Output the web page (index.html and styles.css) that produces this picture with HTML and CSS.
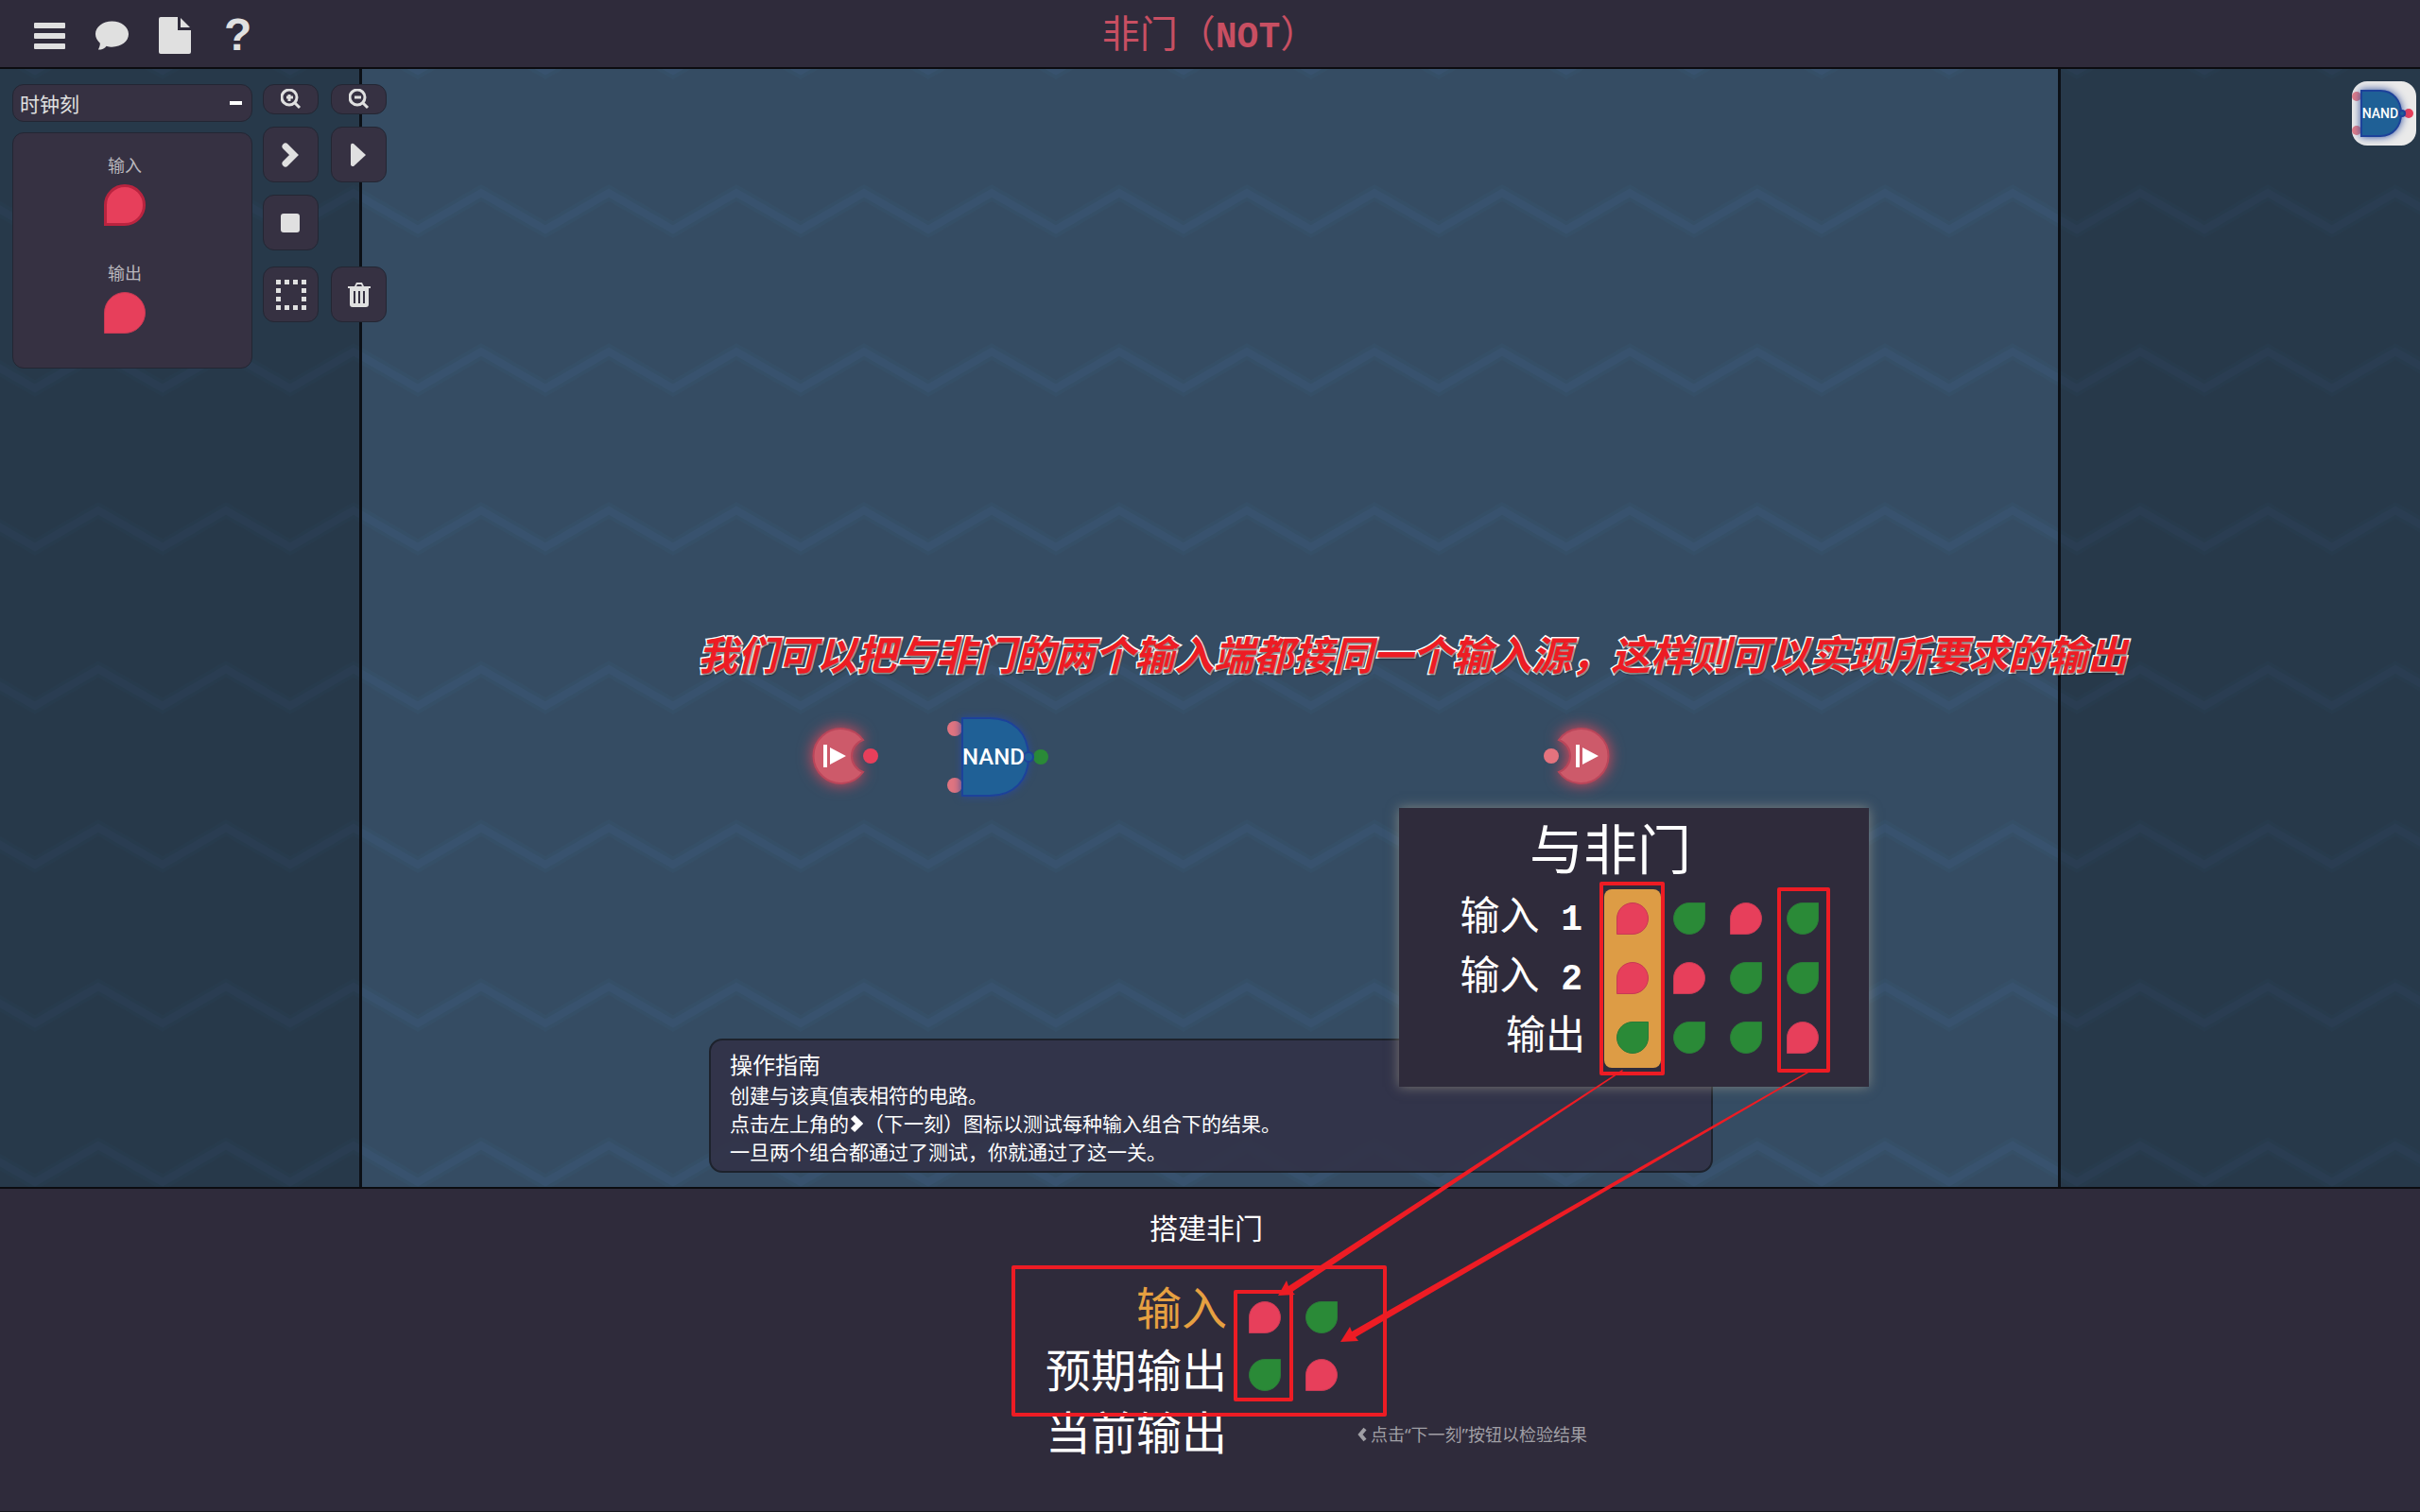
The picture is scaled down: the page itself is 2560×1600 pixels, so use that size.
FILE: index.html
```html
<!DOCTYPE html>
<html lang="zh-CN">

<head>
    <meta charset="UTF-8">
    <meta name="viewport" content="width=device-width, initial-scale=1.0">
    <title>非门（NOT）</title>
    <link rel="stylesheet" href="styles.css">
</head>

<body>
    <header class="header">
        <nav class="menu">
            <button type="button" aria-label="菜单">
                <svg width="33" height="30" viewBox="0 0 33 30"><rect y="2" width="33" height="6" rx="1"/><rect y="13" width="33" height="6" rx="1"/><rect y="24" width="33" height="6" rx="1"/></svg>
            </button>
            <button type="button" aria-label="对话">
                <svg width="37" height="34" viewBox="0 0 38 34"><path d="M19 2C9 2 1 8 1 16c0 4 2 7 5 10 0 3-1 5-2 7 4 0 7-1 9-4 2 1 4 1 6 1 10 0 18-6 18-14S29 2 19 2z"/></svg>
            </button>
            <button type="button" aria-label="文档">
                <svg width="34" height="40" viewBox="0 0 34 40"><path d="M2 1h18v14h14v23a2 2 0 0 1-2 2H2a2 2 0 0 1-2-2V3a2 2 0 0 1 2-2z"/><path d="M23 2l10 10H23z"/></svg>
            </button>
            <button type="button" class="help" aria-label="帮助">?</button>
        </nav>
        <h1>非门（<span>NOT</span>）</h1>
    </header>

    <main class="workspace">
        <svg class="waves" aria-hidden="true">
            <defs>
                <pattern id="zigzag" x="37" y="100" width="135" height="168" patternUnits="userSpaceOnUse">
                    <path d="M-68 31L0 70L67 31L135 70L203 31" fill="none" stroke="#354f67" stroke-width="15"/>
                    <path d="M-68 31L0 70L67 31L135 70L203 31" fill="none" stroke="#38526e" stroke-width="8"/>
                </pattern>
            </defs>
            <rect width="100%" height="100%" fill="url(#zigzag)"/>
        </svg>

        <aside class="side side-left">
            <div class="toolbox">
                <button type="button" class="fold">时钟刻<i></i></button>
                <div class="ports">
                    <span>输入</span>
                    <i class="drop big edge"></i>
                    <span>输出</span>
                    <i class="drop big"></i>
                </div>
            </div>
            <div class="tools">
                <button type="button" class="flat" aria-label="放大">
                    <svg width="22" height="22" viewBox="0 0 22 22"><path class="line" d="M15 15l5 5M9 6v7M6 9h7"/><circle class="line" cx="9" cy="9" r="8"/></svg>
                </button>
                <button type="button" class="flat" aria-label="缩小">
                    <svg width="22" height="22" viewBox="0 0 22 22"><path class="line" d="M15 15l5 5M6 9h7"/><circle class="line" cx="9" cy="9" r="8"/></svg>
                </button>
                <button type="button" aria-label="下一刻">
                    <svg width="20" height="26" viewBox="0 0 20 26"><path class="thick" d="M4 4l9 9l-9 9"/></svg>
                </button>
                <button type="button" aria-label="运行">
                    <svg width="20" height="26" viewBox="0 0 20 26"><path d="M1 3Q1 0 4 1L17 13L4 25Q1 25 1 23z"/></svg>
                </button>
                <button type="button" aria-label="停止">
                    <svg width="22" height="20" viewBox="0 0 22 20"><rect width="20" height="20" rx="3"/></svg>
                </button>
                <button type="button" class="row-start" aria-label="框选">
                    <svg width="32" height="32" viewBox="0 0 32 32"><path d="M0 0h5v5H0zM9 0h5v5H9zM18 0h5v5h-5zM27 0h5v5h-5zM0 9h5v5H0zM27 9h5v5h-5zM0 18h5v5H0zM27 18h5v5h-5zM0 27h5v5H0zM9 27h5v5H9zM18 27h5v5h-5zM27 27h5v5h-5z"/></svg>
                </button>
                <button type="button" class="row-end" aria-label="删除">
                    <svg width="24" height="26" viewBox="0 0 24 26"><path fill-rule="evenodd" d="M0 4h7l2-4h6l2 4h7v2h-2v17a3 3 0 0 1-3 3H5a3 3 0 0 1-3-3V6H0zM9 4h6l-1-2h-4zM6 9v13h2V9zM11 9v13h2V9zM16 9v13h2V9z"/></svg>
                </button>
            </div>
        </aside>

        <section class="board">
            <div class="guide">
                <h2>操作指南</h2>
                <p>创建与该真值表相符的电路。</p>
                <p>点击左上角的<svg width="14" height="20" viewBox="0 0 14 20"><path d="M3 3l7 7l-7 7" fill="none" stroke="#fff" stroke-width="6"/></svg>（下一刻）图标以测试每种输入组合下的结果。</p>
                <p>一旦两个组合都通过了测试，你就通过了这一关。</p>
            </div>
        </section>

        <aside class="side side-right">
            <button type="button" class="gate" aria-label="与非门">
                <svg width="68" height="68" viewBox="0 0 68 68">
                    <circle cx="5" cy="16" r="5" fill="#df7c88"/>
                    <circle cx="5" cy="52" r="5" fill="#df7c88"/>
                    <circle cx="60" cy="34" r="5" fill="#e73f5b"/>
                    <path class="nand glow" d="M10 10h20c14 0 22 11 22 24s-8 24-22 24H10z"/>
                    <circle class="nand" cx="53" cy="34" r="3"/>
                    <text x="30" y="39" font-size="14">NAND</text>
                </svg>
            </button>
        </aside>

        <!-- 画布上的元件 -->
        <svg class="node node-in" width="90" height="90" viewBox="0 0 90 90">
            <path class="pin" d="M65 28a29 29 0 1 0 0 34a18 18 0 0 1 0-34z"/>
            <path d="M23 33h4v24h-4zM30 36l17 9l-17 9z" fill="#fff"/>
            <circle cx="73" cy="45" r="8" fill="#e73f5b"/>
        </svg>
        <svg class="node node-nand" width="120" height="110" viewBox="0 0 120 110">
            <circle cx="20" cy="25" r="8" fill="#df7480"/>
            <circle cx="20" cy="85" r="8" fill="#df7480"/>
            <circle cx="111" cy="55" r="8" fill="#2a8a37"/>
            <path class="nand glow" d="M28 14h29c25 0 41 16 41 41S82 96 57 96H28z"/>
            <circle class="nand" cx="98" cy="55" r="5"/>
            <text x="61" y="63" font-size="24">NAND</text>
        </svg>
        <svg class="node node-out" width="90" height="90" viewBox="0 0 90 90">
            <path class="pin" d="M25 28a29 29 0 1 1 0 34a18 18 0 0 0 0-34z"/>
            <path d="M43 33h4v24h-4zM50 36l17 9l-17 9z" fill="#fff"/>
            <circle cx="17" cy="45" r="8" fill="#e4737e"/>
        </svg>
    </main>

    <section class="verify">
        <h2>搭建非门</h2>
        <table class="truth">
            <tr class="first">
                <th scope="row" class="active">输入</th>
                <td><i class="drop"></i></td>
                <td><i class="drop green"></i></td>
            </tr>
            <tr class="second">
                <th scope="row">预期输出</th>
                <td><i class="drop green"></i></td>
                <td><i class="drop"></i></td>
            </tr>
            <tr>
                <th scope="row">当前输出</th>
                <td></td>
                <td></td>
                <td class="hint"><svg width="10" height="16" viewBox="0 0 10 16"><path d="M8 2L3 8l5 6" fill="none" stroke="#a09fa5" stroke-width="4"/></svg>点击“下一刻”按钮以检验结果</td>
            </tr>
        </table>
    </section>

    <div class="popup">
        <h2>与非门</h2>
        <table>
            <tr>
                <th scope="row">输入<b> 1</b></th>
                <td><i class="drop"></i></td>
                <td><i class="drop green"></i></td>
                <td><i class="drop"></i></td>
                <td><i class="drop green"></i></td>
            </tr>
            <tr>
                <th scope="row">输入<b> 2</b></th>
                <td><i class="drop"></i></td>
                <td><i class="drop"></i></td>
                <td><i class="drop green"></i></td>
                <td><i class="drop green"></i></td>
            </tr>
            <tr>
                <th scope="row">输出</th>
                <td><i class="drop green"></i></td>
                <td><i class="drop green"></i></td>
                <td><i class="drop green"></i></td>
                <td><i class="drop"></i></td>
            </tr>
        </table>
    </div>

    <p class="note">我们可以把与非门的两个输入端都接同一个输入源，这样则可以实现所要求的输出</p>

    <!-- 红框和箭头 -->
    <svg class="marks" width="2560" height="1600" viewBox="0 0 2560 1600" aria-hidden="true">
        <g fill="none" stroke="#ed1c24" stroke-width="4" stroke-linejoin="round">
            <rect x="1694" y="935" width="65" height="201"/>
            <rect x="1882" y="941" width="52" height="192"/>
            <rect x="1072" y="1341" width="393" height="156"/>
            <rect x="1307" y="1367" width="59" height="114"/>
        </g>
        <g fill="#ed1c24">
            <path d="M1717 1133L1367 1367L1370 1370L1352 1371L1361 1355L1363 1361L1716 1132z"/>
            <path d="M1915 1134L1434 1415L1437 1419L1418 1420L1428 1404L1430 1409L1914 1133z"/>
        </g>
    </svg>
</body>

</html>
```
FILE: styles.css
```css
* {
    box-sizing: border-box;
}

body {
    margin: 0;
    min-height: 100vh;
    display: flex;
    flex-direction: column;
    position: relative;
    overflow-x: hidden;
    background-color: #2f2b3b;
    color: #fff;
    font-family: "Noto Sans CJK SC", sans-serif;
}

h1,
h2,
p {
    margin: 0;
    font-weight: 400;
}

button {
    padding: 0;
    border: none;
    background: none;
    color: #e0e0e0;
    font-family: inherit;
    cursor: pointer;
}

svg {
    fill: #e0e0e0;
}

/* 顶栏 */
.header {
    height: 73px;
    display: grid;
    grid-template-columns: 1fr auto 1fr;
    align-items: center;
    border-bottom: 2px solid #0c0c10;
}

.menu {
    display: flex;
    align-items: center;
    gap: 31px;
    padding: 2px 0 0 36px;
}

.menu svg {
    display: block;
}

.help {
    margin-left: 4px;
    font: 700 48px/48px "Liberation Sans", sans-serif;
}

.header h1 {
    padding-bottom: 6px;
    color: #c84f62;
    font-size: 40px;
    line-height: 60px;
}

.header h1 span {
    font: 700 38px/40px "Liberation Mono", monospace;
}

/* 工作区 */
.workspace {
    flex: 1;
    display: grid;
    grid-template-columns: 383px 1fr 383px;
    position: relative;
    background-color: #354c63;
}

.waves {
    position: absolute;
    width: 100%;
    height: 100%;
}

.side {
    position: relative;
    z-index: 1;
    display: flex;
    align-items: flex-start;
    background-color: rgba(0, 0, 0, .25);
}

.side-left {
    padding: 16px 0 0 13px;
    gap: 11px;
    border-right: 3px solid #0c1016;
}

.side-right {
    justify-content: flex-end;
    padding: 13px 4px 0 0;
    border-left: 3px solid #0c1016;
}

.toolbox {
    flex: none;
    width: 254px;
}

.fold,
.ports,
.tools button {
    background-color: #363142;
    border: 1px solid #232633;
    border-radius: 12px;
}

.fold {
    display: flex;
    justify-content: space-between;
    align-items: center;
    width: 100%;
    height: 40px;
    padding: 0 10px 0 7px;
    font-size: 21px;
    line-height: 36px;
}

.fold i {
    width: 13px;
    height: 4px;
    background-color: #fff;
}

.ports {
    display: flex;
    flex-direction: column;
    align-items: center;
    height: 250px;
    margin-top: 11px;
    padding: 20px 16px 0 0;
    color: #b9b7bd;
    font-size: 18px;
    line-height: 26px;
}

.tools {
    flex: none;
    display: grid;
    grid-template-columns: 59px 59px;
    gap: 13px;
}

.tools button {
    display: flex;
    justify-content: center;
    align-items: center;
    height: 59px;
}

.tools .flat {
    height: 32px;
}

.tools .row-start {
    grid-column: 1;
    margin-top: 4px;
}

.tools .row-end {
    margin-top: 4px;
}

.line {
    fill: none;
    stroke: #e0e0e0;
    stroke-width: 3;
}

.thick {
    fill: none;
    stroke: #e0e0e0;
    stroke-width: 7;
    stroke-linecap: round;
}

/* 信号：红色为0，绿色为1 */
.drop {
    display: block;
    width: 34px;
    height: 34px;
    margin: 0 auto;
    background-color: #e73f5b;
    border: 1px solid #c63a54;
    border-radius: 50% 50% 50% 0;
}

.drop.green {
    background-color: #2a8a37;
    border-color: #2a7a38;
    border-radius: 50% 0 50% 50%;
}

.drop.big {
    width: 44px;
    height: 44px;
    margin: 8px 0 36px;
}

.drop.edge {
    border: 3px solid #b9243f;
}

.gate {
    width: 68px;
    height: 68px;
    border-radius: 16px;
    background-color: #eaeaea;
}

.gate svg {
    display: block;
}

.nand {
    fill: #1f6096;
    stroke: #1d429a;
    stroke-width: 2;
}

.glow {
    filter: drop-shadow(0 0 4px #2a4a9a);
}

text {
    fill: #fff;
    font-family: Roboto, "Liberation Sans", sans-serif;
    font-weight: 500;
    text-anchor: middle;
}

.board {
    position: relative;
    display: flex;
    justify-content: center;
    align-items: flex-end;
    padding: 0 0 15px 2px;
}

.guide {
    width: 1062px;
    padding: 8px 20px 6px;
    background-color: rgba(50, 50, 71, .9);
    border: 2px solid #1d222c;
    border-radius: 14px;
}

.guide h2 {
    font-size: 24px;
    line-height: 34px;
}

.guide p {
    font-size: 21px;
    line-height: 30px;
}

.guide svg {
    margin: 0 1px;
    vertical-align: -2px;
}

.node {
    position: absolute;
    z-index: 1;
    overflow: visible;
}

.node-in {
    top: 682px;
    left: calc(50% - 432px);
}

.node-nand {
    top: 673px;
    left: calc(50% - 290px);
}

.node-out {
    top: 682px;
    left: calc(50% + 344px);
}

.pin {
    fill: #cd5a6a;
    stroke: #b9465a;
    stroke-width: 2;
    filter: drop-shadow(0 0 8px #e0485a);
}

/* 底部验证区 */
.verify {
    height: 344px;
    padding-top: 16px;
    border-top: 2px solid #0c0c10;
    border-bottom: 1px solid #16151c;
}

.verify h2 {
    padding-right: 8px;
    font-size: 30px;
    line-height: 48px;
    text-align: center;
}

table {
    border-collapse: collapse;
}

th,
td {
    padding: 0;
}

th {
    font-weight: 400;
    text-align: right;
    white-space: nowrap;
}

td {
    width: 60px;
}

.truth {
    margin: 26px 0 0 calc(50% - 174px);
}

.truth th {
    height: 66px;
    padding-right: 10px;
    font-size: 48px;
    line-height: 66px;
}

.truth .active {
    color: #e6a041;
}

.first td {
    padding-top: 26px;
}

.second td {
    padding-top: 16px;
}

.truth .hint {
    width: auto;
    padding: 8px 0 0 8px;
    color: #a09fa5;
    font-family: "Noto Sans", "Noto Sans CJK SC", sans-serif;
    font-size: 18px;
    white-space: nowrap;
}

.hint svg {
    margin-right: 4px;
    vertical-align: -1px;
}

/* 与非门真值表 */
.popup {
    position: absolute;
    z-index: 2;
    top: 855px;
    left: calc(50% + 200px);
    width: 497px;
    padding: 0 40px 20px 0;
    background-color: #2f2b3b;
    box-shadow: 0 0 12px rgba(200, 190, 160, .5);
}

.popup h2 {
    height: 86px;
    padding-right: 10px;
    font-size: 57px;
    line-height: 80px;
    text-align: center;
}

.popup table {
    margin-left: auto;
}

.popup th {
    height: 63px;
    padding-right: 20px;
    font-size: 42px;
    line-height: 50px;
    vertical-align: top;
}

.popup td {
    padding-bottom: 2px;
}

.popup b {
    margin-right: 3px;
    font: 700 38px/40px "Liberation Mono", monospace;
    white-space: pre;
}

.popup td:nth-child(2) {
    background-color: #dd9c45;
}

.popup tr:first-child td:nth-child(2) {
    border-radius: 8px 8px 0 0;
}

.popup tr:last-child td:nth-child(2) {
    border-radius: 0 0 8px 8px;
}

.note {
    position: absolute;
    z-index: 3;
    top: 661px;
    left: calc(50% - 542px);
    color: #ed1c24;
    font-size: 42px;
    font-style: italic;
    font-weight: 700;
    line-height: 60px;
    white-space: nowrap;
    -webkit-text-stroke: 3px #fff;
    paint-order: stroke fill;
    text-shadow: 1px 2px 2px rgba(0, 0, 0, .5);
}

.marks {
    position: absolute;
    z-index: 4;
    top: 0;
    left: calc(50% - 1280px);
    pointer-events: none;
}
```
